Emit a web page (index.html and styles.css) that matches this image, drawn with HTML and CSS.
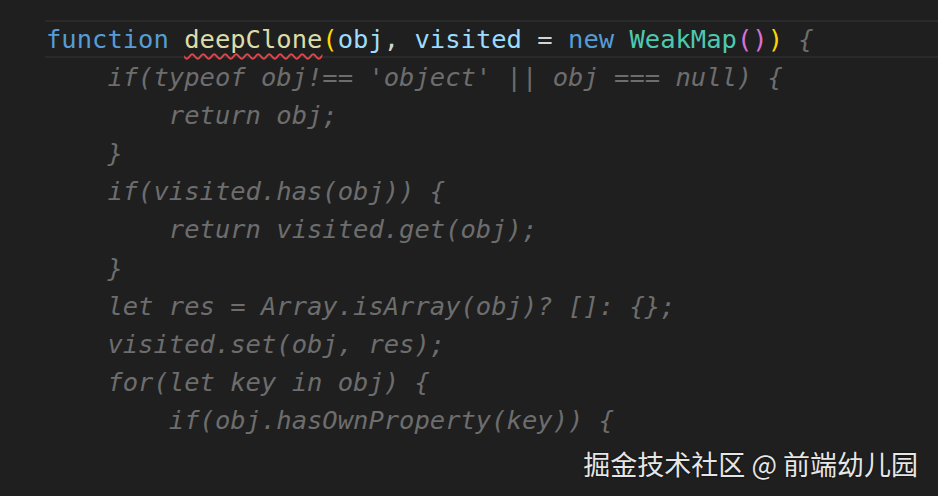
FILE: index.html
```html
<!DOCTYPE html>
<html lang="zh">
<head>
<meta charset="utf-8">
<title>deepClone</title>
<link rel="stylesheet" href="styles.css">
</head>
<body>
<div class="editor">
  <div class="code">
    <div class="line current"><span class="kw">function</span> <span class="fn err">deepClone</span><span class="b1">(</span><span class="var">obj</span><span class="pl">, </span><span class="var">visited</span><span class="pl"> = </span><span class="kw">new</span> <span class="cls">WeakMap</span><span class="b2">()</span><span class="b1">)</span> <span class="dim">{</span></div>
    <div class="line dim">    if(typeof obj!== 'object' || obj === null) {</div>
    <div class="line dim">        return obj;</div>
    <div class="line dim">    }</div>
    <div class="line dim">    if(visited.has(obj)) {</div>
    <div class="line dim">        return visited.get(obj);</div>
    <div class="line dim">    }</div>
    <div class="line dim">    let res = Array.isArray(obj)? []: {};</div>
    <div class="line dim">    visited.set(obj, res);</div>
    <div class="line dim">    for(let key in obj) {</div>
    <div class="line dim">        if(obj.hasOwnProperty(key)) {</div>
  </div>
  <div class="watermark">掘金技术社区 @ 前端幼儿园</div>
</div>
</body>
</html>
```

FILE: styles.css
```css
html, body {
  margin: 0;
  padding: 0;
  background: #1f1f1f;
}
.editor {
  position: relative;
  width: 938px;
  height: 496px;
  overflow: hidden;
  background: #1f1f1f;
}
.code {
  padding-top: 20px;
  padding-left: 45px;
  font-family: "DejaVu Sans Mono", "Liberation Mono", monospace;
  font-size: 25.5px;
  color: #d4d4d4;
}
.line {
  height: 38.1px;
  line-height: 38.1px;
  white-space: pre;
  box-sizing: border-box;
}
.line.current {
  border-top: 2px solid #2a2a2a;
  border-bottom: 2px solid #2a2a2a;
  line-height: 34px;
  padding-left: 1px;
}
.line.dim { padding-left: 1px; }
.kw { color: #569cd6; }
.fn { color: #dcdcaa; }
.err {
  text-decoration: underline wavy #e0454a;
  text-decoration-thickness: 1.5px;
  text-underline-offset: 5px;
  text-decoration-skip-ink: none;
}
.var { color: #9cdcfe; }
.pl { color: #d4d4d4; }
.cls { color: #4ec9b0; }
.b1 { color: #ffd700; }
.b2 { color: #da70d6; }
.dim {
  color: #6d6d6d;
  font-style: italic;
}
.watermark {
  position: absolute;
  right: 20px;
  bottom: 16px;
  font-family: "Noto Sans CJK SC", sans-serif;
  font-size: 27px;
  line-height: 32px;
  color: #e6e6e6;
  text-shadow: 0 0 2px rgba(0,0,0,0.8);
}
```
